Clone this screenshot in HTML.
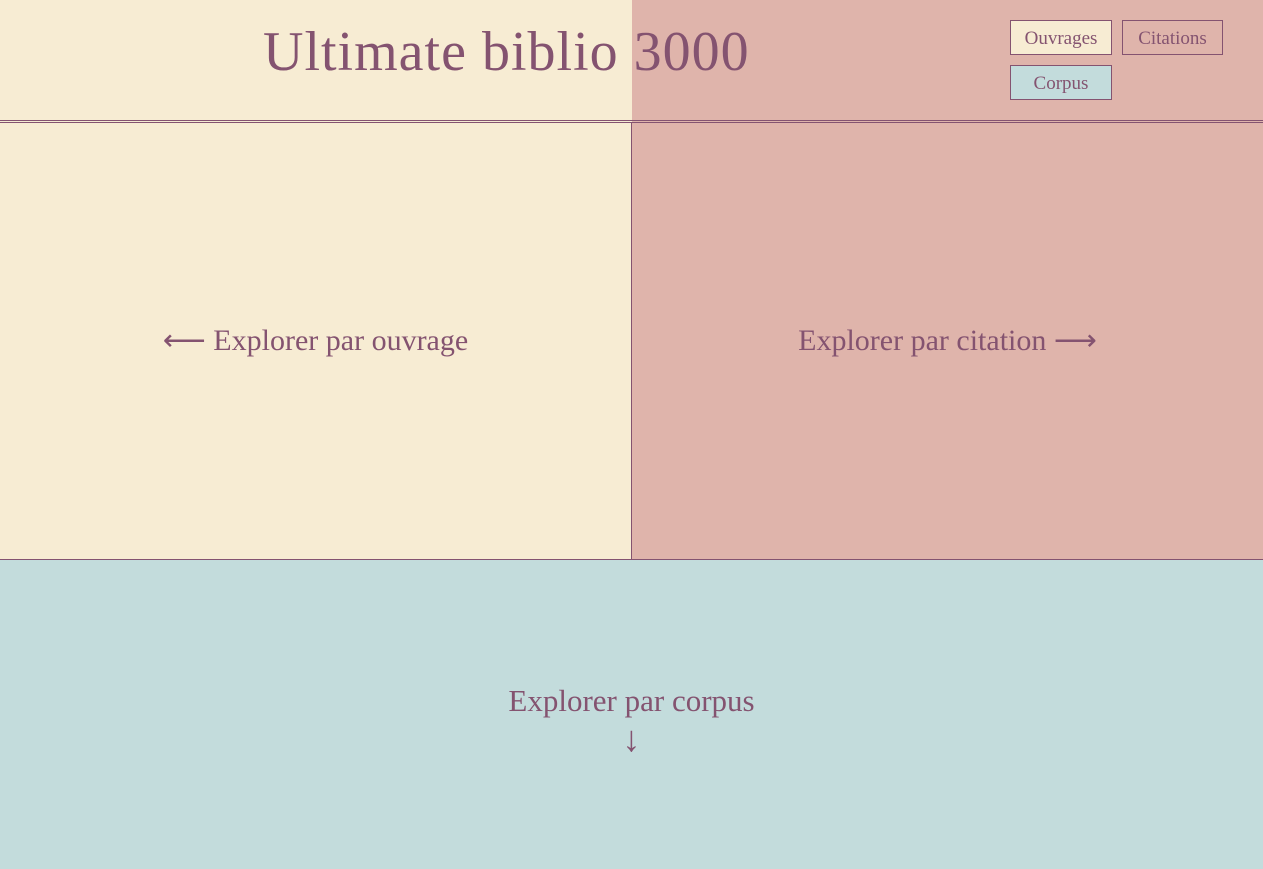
<!DOCTYPE html>
<html><head><style>
*{margin:0;padding:0;box-sizing:border-box}
body{width:1263px;height:869px;position:relative;overflow:hidden;font-family:"Liberation Serif",serif;color:#845370;background:#c3dcdc}
.a{position:absolute}
.t{white-space:nowrap;font-size:30px;line-height:1}
.b{position:absolute;height:35px;width:102px;border:1px solid #845370;font-size:19px;text-align:center;line-height:35px}
</style></head><body>
<div class="a" style="left:0;top:0;width:632px;height:559px;background:#f7ecd3"></div>
<div class="a" style="left:632px;top:0;width:631px;height:559px;background:#dfb4ab"></div>
<div class="a" style="left:0;top:120px;width:1263px;height:1px;background:#845370"></div>
<div class="a" style="left:0;top:122px;width:1263px;height:1px;background:#845370"></div>
<div class="a" style="left:631px;top:123px;width:1px;height:436px;background:#845370"></div>
<div class="a" style="left:0;top:559px;width:1263px;height:1px;background:#845370"></div>
<div class="a t" style="left:263px;top:24px;font-size:56px;width:484px;letter-spacing:1px">Ultimate biblio 3000</div>
<div class="b" style="left:1010px;top:20px;background:#f7ecd3">Ouvrages</div>
<div class="b" style="left:1122px;top:20px;width:101px">Citations</div>
<div class="b" style="left:1010px;top:65px;background:#c3dcdc">Corpus</div>
<div class="a t" style="left:0;width:631px;top:326px;text-align:center">⟵ Explorer par ouvrage</div>
<div class="a t" style="left:632px;width:631px;top:326px;text-align:center">Explorer par citation ⟶</div>
<div class="a t" style="left:0;width:1263px;top:682px;text-align:center;font-size:31px;line-height:38px">Explorer par corpus<br><span style="font-size:36px">↓</span></div>
</body></html>
